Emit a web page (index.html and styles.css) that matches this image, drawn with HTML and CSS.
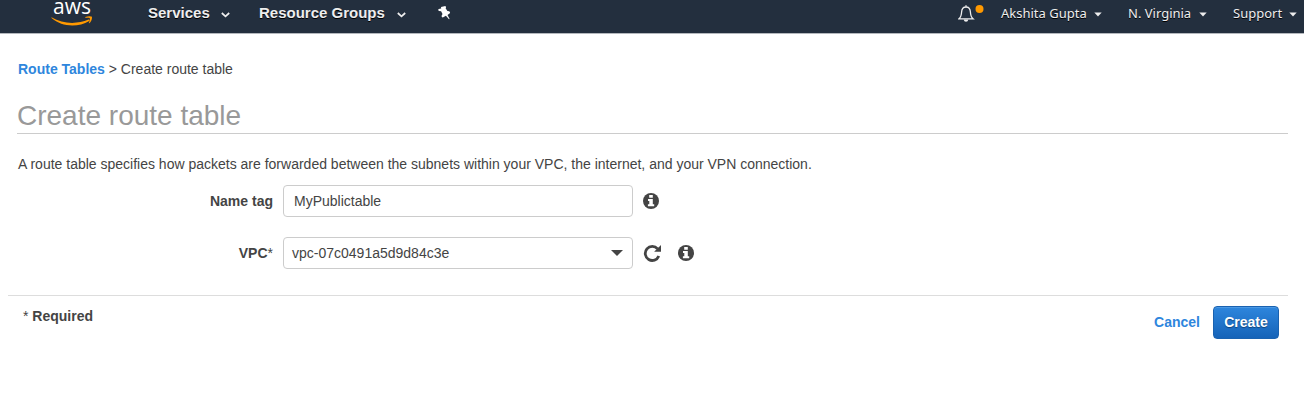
FILE: index.html
```html
<!DOCTYPE html>
<html lang="en">
<head>
<meta charset="utf-8">
<title>Create route table</title>
<link rel="stylesheet" href="styles.css">
</head>
<body>
<header class="topbar">
  <a class="logo" aria-label="aws">
    <span class="logo-word">aws</span>
    <svg class="smile" width="42" height="11" viewBox="0 0 42 11"><path d="M.5 1.2C12 8.2 26 8.4 37.5 3.6C38.6 3.3 39 4.2 38.2 4.9C27 11.6 11 11.2.5 2Z" fill="#f90"/><path d="M34.3 1C37 -.2 40 .1 40.9 .8C41.3 3 40.2 6 38.2 7.3C37.7 7.5 37.8 7 37.9 6.7C38.6 5 39.2 3 38.8 2.2C38 1.6 36.2 1.7 34.5 1.9Z" fill="#f90"/></svg>
  </a>
  <nav class="main-nav">
    <a class="services">Services</a>
    <svg class="chev" width="9" height="6" viewBox="0 0 9 6"><path d="M.8 1L4.5 4.4L8.2 1"/></svg>
    <a class="groups">Resource Groups</a>
    <svg class="chev" width="9" height="6" viewBox="0 0 9 6"><path d="M.8 1L4.5 4.4L8.2 1"/></svg>
    <svg class="pin" width="13" height="14" viewBox="0 0 13 14"><path d="M3 .9L7.4 0L8.1 1.2L7.6 2.3L9.4 5.1L11.3 5.3L12.1 6.5L11.6 7.4L9.5 8.9L11.6 13L11 13.3L7.9 9.8L4.8 11.4L3.8 11.1L3.6 9.8L4.5 8.1L3.1 5.2L1 5.1L.1 4.1L.7 3.1L3.2 2.4Z"/></svg>
  </nav>
  <nav class="account-nav">
    <svg class="bell" width="26" height="19" viewBox="0 0 26 19"><path d="M8 1.2V3M1 14.8H15C12.7 13 12.6 11.4 12.4 8C12.2 4.6 10.5 3 8 3S3.8 4.6 3.6 8C3.4 11.4 3.3 13 1 14.8Z" fill="none" stroke="#eee" stroke-width="1.3"/><path d="M5.7 15.5H10.3Q10 17.8 8 17.8T5.7 15.5Z" fill="#eee"/><circle cx="21.5" cy="5" r="4" fill="#f90"/></svg>
    <a class="user">Akshita Gupta</a>
    <svg class="caret" width="8" height="5" viewBox="0 0 8 5"><path d="M.3 .5H7.7L4 4.5Z"/></svg>
    <a class="region">N. Virginia</a>
    <svg class="caret" width="8" height="5" viewBox="0 0 8 5"><path d="M.3 .5H7.7L4 4.5Z"/></svg>
    <a class="support">Support</a>
    <svg class="caret" width="8" height="5" viewBox="0 0 8 5"><path d="M.3 .5H7.7L4 4.5Z"/></svg>
  </nav>
</header>
<main>
  <div class="crumbs"><a>Route Tables</a> &gt; Create route table</div>
  <h1>Create route table</h1>
  <p class="intro">A route table specifies how packets are forwarded between the subnets within your VPC, the internet, and your VPN connection.</p>
  <form class="form">
    <div class="row">
      <label>Name tag</label>
      <div class="field name-field">MyPublictable</div>
      <svg class="info" width="16" height="16" viewBox="0 0 16 16"><circle cx="8" cy="8" r="8"/><path d="M6.2 2H9.8V4.8H6.2ZM5 6H9.8V11.2H11.2V13.2H4.9V11.2H6.3V8H5Z" fill="#fff"/></svg>
    </div>
    <div class="row">
      <label>VPC<span class="star">*</span></label>
      <div class="field select"><span>vpc-07c0491a5d9d84c3e</span><svg width="12" height="6" viewBox="0 0 12 6"><path d="M0 0H12L6 6Z"/></svg></div>
      <svg class="refresh" width="18" height="18" viewBox="0 0 18 18"><path d="M14.6 4.9A7 7 0 1 0 15.8 12" fill="none" stroke="#444" stroke-width="2.8"/><path d="M18 1V7.8H11.1Z"/></svg>
      <svg class="info" width="16" height="16" viewBox="0 0 16 16"><circle cx="8" cy="8" r="8"/><path d="M6.2 2H9.8V4.8H6.2ZM5 6H9.8V11.2H11.2V13.2H4.9V11.2H6.3V8H5Z" fill="#fff"/></svg>
    </div>
  </form>
</main>
<footer class="actions">
  <div class="required"><span class="star">*</span> Required</div>
  <div class="buttons"><a class="cancel">Cancel</a><button class="create" type="button">Create</button></div>
</footer>
</body>
</html>
```
FILE: styles.css
```css
* { box-sizing: border-box; }
body { margin: 0; background: #fff; color: #444; font: 14px/20px "Liberation Sans", Arial, sans-serif; overflow: hidden; }
.topbar { height: 34px; background: #232f3e; border-bottom: 1px solid #b4b8bd; display: flex; align-items: flex-start; color: #eee; }
.logo { width: 42px; height: 28px; margin-left: 51px; display: flex; flex-direction: column; align-items: center; }
.logo-word { font: 21px/13px "Open Sans", sans-serif; color: #fff; height: 16px; }
.smile { flex: none; }
.main-nav { display: flex; align-items: center; height: 26px; margin-left: 55px; font-size: 15px; font-weight: bold; text-shadow: 0 1px 0 #000; white-space: nowrap; }
.services { width: 73px; }
.groups { width: 138px; margin-left: 29px; }
.chev { fill: none; stroke: #eee; stroke-width: 1.7; margin-top: 3px; }
.pin { fill: #fff; margin-left: 32px; }
.account-nav { display: flex; align-items: center; height: 26px; margin-left: auto; margin-right: 7px; font: 13px/20px "Noto Sans", sans-serif; text-shadow: 0 1px 0 #000; white-space: nowrap; }
.bell { margin: 1px 17px 0 0; }
.user { width: 93px; }
.region { width: 71px; margin-left: 26px; }
.support { width: 56px; margin-left: 26px; }
.caret { fill: #eee; margin-top: 2px; }
main { padding: 25px 16px 6px 18px; }
a { color: #2e86dd; font-weight: bold; }
.topbar a { color: inherit; font-weight: inherit; }
.crumbs { color: #444; }
h1 { margin: 20px 0 0 -1px; height: 35px; font-size: 28px; line-height: 33px; font-weight: normal; color: #999; border-bottom: 1px solid #ccc; }
.intro { margin: 20px 0 11px; }
.row { display: flex; align-items: center; height: 32px; margin-bottom: 20px; }
label { width: 255px; margin-right: 10px; text-align: right; font-weight: bold; }
.star { font-weight: normal; }
.field { width: 350px; height: 32px; border: 1px solid #ccc; border-radius: 4px; padding: 0 10px; line-height: 30px; margin-right: 10px; }
.select { padding: 0 9px 0 8px; display: flex; align-items: center; justify-content: space-between; }
svg { flex: none; }
.info, .refresh, .select svg { fill: #444; }
.refresh { margin-right: 17px; }
.actions { margin: 0 16px 0 8px; border-top: 1px solid #ddd; padding: 10px 9px 0 15px; display: flex; justify-content: space-between; font-weight: bold; }
.buttons { display: flex; align-items: center; }
.cancel { margin-bottom: 1px; }
.create { width: 66px; height: 33px; margin-left: 13px; padding: 0 0 1px; border: 1px solid #1a62b0; border-radius: 4px; background: linear-gradient(#2e86dd, #1563b8); box-shadow: inset 0 1px 0 #4a98e4; color: #fff; font: bold 14px "Liberation Sans", Arial, sans-serif; text-shadow: 0 1px 1px #10437a; }
```
